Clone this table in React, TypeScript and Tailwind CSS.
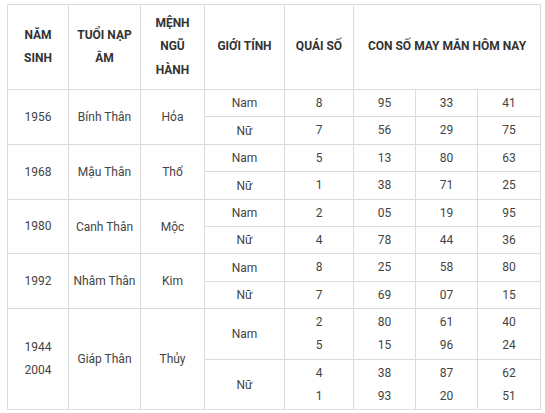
const groups = [
  { year: ["1956"], tuoi: "Bính Thân", menh: "Hỏa", rows: [
    { g: "Nam", q: ["8"], n: [["95"], ["33"], ["41"]] },
    { g: "Nữ", q: ["7"], n: [["56"], ["29"], ["75"]] },
  ] },
  { year: ["1968"], tuoi: "Mậu Thân", menh: "Thổ", rows: [
    { g: "Nam", q: ["5"], n: [["13"], ["80"], ["63"]] },
    { g: "Nữ", q: ["1"], n: [["38"], ["71"], ["25"]] },
  ] },
  { year: ["1980"], tuoi: "Canh Thân", menh: "Mộc", rows: [
    { g: "Nam", q: ["2"], n: [["05"], ["19"], ["95"]] },
    { g: "Nữ", q: ["4"], n: [["78"], ["44"], ["36"]] },
  ] },
  { year: ["1992"], tuoi: "Nhâm Thân", menh: "Kim", rows: [
    { g: "Nam", q: ["8"], n: [["25"], ["58"], ["80"]] },
    { g: "Nữ", q: ["7"], n: [["69"], ["07"], ["15"]] },
  ] },
  { year: ["1944", "2004"], tuoi: "Giáp Thân", menh: "Thủy", rows: [
    { g: "Nam", q: ["2", "5"], n: [["80", "15"], ["61", "96"], ["40", "24"]] },
    { g: "Nữ", q: ["4", "1"], n: [["38", "93"], ["87", "20"], ["62", "51"]] },
  ] },
]

const heights = ["h-[27px]", "h-[28px]", "h-[27px]", "h-[28px]", "h-[27px]", "h-[27px]", "h-[28px]", "h-[27px]", "h-[51px]", "h-[50px]"]

function Lines({ items }: { items: string[] }) {
  return (
    <>
      {items.map((t, i) => (
        <div key={i} className="leading-[23px]">{t}</div>
      ))}
    </>
  )
}

export default function App() {
  const cell = "border border-[#dcdcdc] text-center align-middle p-0"
  let r = 0
  return (
    <div className="bg-white w-[545px] h-[413px] pt-[4px] pl-[7px] font-['Roboto','Liberation_Sans',sans-serif] text-[12px] text-[#444]">
      <table className="border-collapse w-[533px] table-fixed">
        <colgroup>
          <col className="w-[61px]" />
          <col className="w-[72px]" />
          <col className="w-[64px]" />
          <col className="w-[80px]" />
          <col className="w-[69px]" />
          <col className="w-[62px]" />
          <col className="w-[62px]" />
          <col className="w-[63px]" />
        </colgroup>
        <thead>
          <tr className="h-[85px] font-bold text-[#333] leading-[23.5px]">
            <th className={cell}>NĂM<br />SINH</th>
            <th className={cell}>TUỔI NẠP<br />ÂM</th>
            <th className={cell}>MỆNH<br />NGŨ<br />HÀNH</th>
            <th className={cell}>GIỚI TÍNH</th>
            <th className={cell}>QUÁI SỐ</th>
            <th className={cell} colSpan={3}>CON SỐ MAY MẮN HÔM NAY</th>
          </tr>
        </thead>
        <tbody>
          {groups.map((grp) =>
            grp.rows.map((row, i) => {
              const h = heights[r++]
              return (
                <tr key={grp.tuoi + i} className={h}>
                  {i === 0 && (
                    <>
                      <td className={cell} rowSpan={2}><Lines items={grp.year} /></td>
                      <td className={cell} rowSpan={2}>{grp.tuoi}</td>
                      <td className={cell} rowSpan={2}>{grp.menh}</td>
                    </>
                  )}
                  <td className={cell}>{row.g}</td>
                  <td className={cell}><Lines items={row.q} /></td>
                  {row.n.map((col, j) => (
                    <td key={j} className={cell}><Lines items={col} /></td>
                  ))}
                </tr>
              )
            })
          )}
        </tbody>
      </table>
    </div>
  )
}
